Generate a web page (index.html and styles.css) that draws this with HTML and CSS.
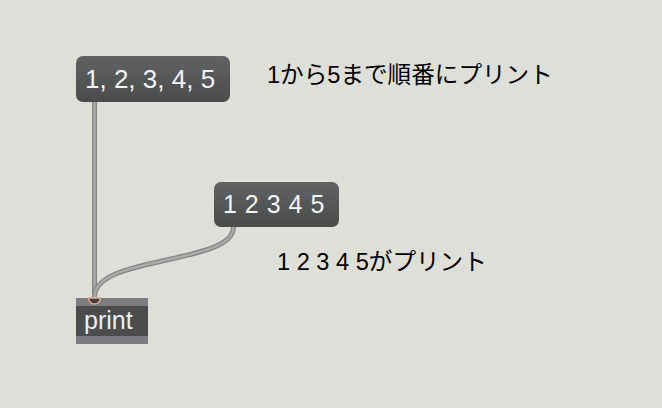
FILE: index.html
```html
<!DOCTYPE html>
<html lang="ja">
<head>
<meta charset="utf-8">
<link rel="stylesheet" href="styles.css">
</head>
<body>
<div class="patcher">
  <div class="msg msg-list">1, 2, 3, 4, 5</div>
  <div class="msg msg-seq">1 2 3 4 5</div>
  <div class="obj obj-print"><span class="obj-label">print</span></div>
  <div class="comment comment-1">1から5まで順番にプリント</div>
  <div class="comment comment-2">1 2 3 4 5がプリント</div>
  <svg class="cords" width="662" height="408" viewBox="0 0 662 408">
    <path class="inlet" d="M88.5 298 A6 6 0 0 0 100.5 298 Z"/>
    <path class="cord-edge" d="M94.5 102 L94.5 297"/>
    <path class="cord-core" d="M94.5 102 L94.5 297"/>
    <path class="cord-edge" d="M233.5 227 C233.5 265 94.5 255 94.5 297"/>
    <path class="cord-core" d="M233.5 227 C233.5 265 94.5 255 94.5 297"/>
  </svg>
</div>
</body>
</html>
```
FILE: styles.css
```css
html, body {
  margin: 0;
  padding: 0;
}
body {
  background: #dedfd9;
  font-family: "Liberation Sans", Arial, "Noto Sans CJK JP", sans-serif;
}
.patcher {
  position: relative;
  width: 662px;
  height: 408px;
  overflow: hidden;
}
.msg {
  position: absolute;
  box-sizing: border-box;
  display: flex;
  align-items: center;
  border-radius: 7px;
  background: linear-gradient(#606264, #4a4c4b);
  color: #f3f5f8;
  white-space: nowrap;
}
.msg-list {
  left: 76px;
  top: 56px;
  width: 154px;
  height: 46px;
  padding-left: 9px;
  font-size: 26px;
}
.msg-seq {
  left: 214px;
  top: 182px;
  width: 125px;
  height: 45px;
  padding-left: 9px;
  font-size: 25px;
  word-spacing: 1px;
}
.obj {
  position: absolute;
  box-sizing: border-box;
  background: #4a4d4c;
  border-top: 8px solid #7b7c80;
  border-bottom: 8px solid #7b7c80;
  display: flex;
  align-items: center;
  color: #eef0f5;
}
.obj-print {
  left: 76px;
  top: 298px;
  width: 72px;
  height: 46px;
  padding-left: 8px;
  font-size: 25px;
}
.obj-label {
  line-height: 1;
  margin-top: -2px;
}
.comment {
  position: absolute;
  color: #000;
  font-family: "Liberation Sans", "Noto Sans CJK JP", sans-serif;
  font-size: 23.6px;
  line-height: 1;
  white-space: nowrap;
}
.comment-1 {
  left: 267px;
  top: 64px;
}
.comment-2 {
  left: 277px;
  top: 251px;
}
.cords {
  position: absolute;
  left: 0;
  top: 0;
  pointer-events: none;
}
.cord-edge {
  fill: none;
  stroke: #858585;
  stroke-width: 5;
}
.cord-core {
  fill: none;
  stroke: #aaaaaa;
  stroke-width: 2.5;
}
.inlet {
  fill: #3f4140;
  stroke: #e6a394;
  stroke-width: 1.5;
}
```
